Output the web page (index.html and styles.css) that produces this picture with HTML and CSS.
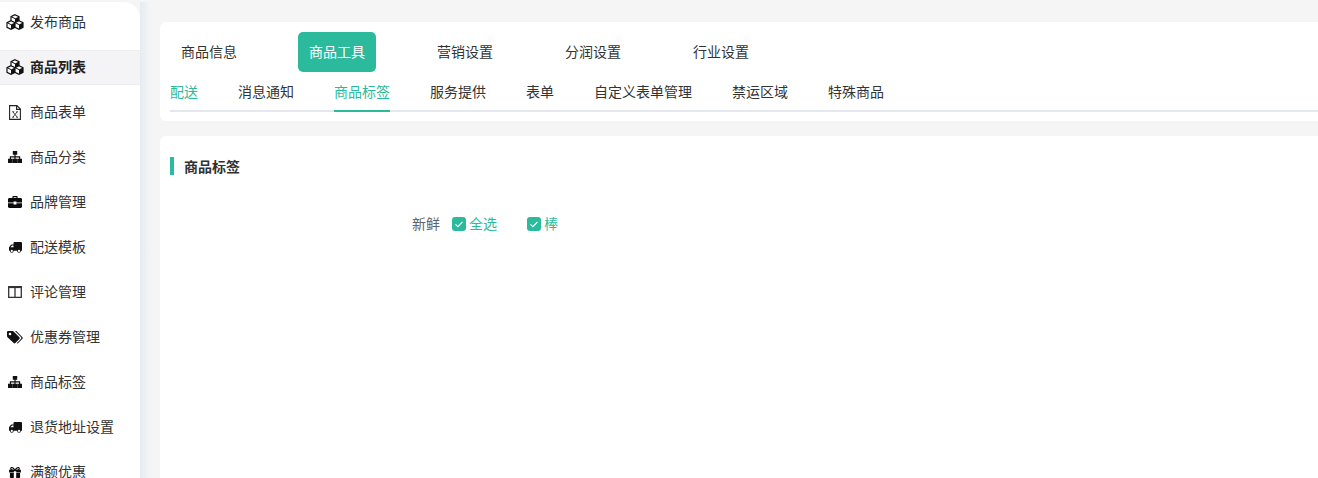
FILE: index.html
```html
<!DOCTYPE html>
<html lang="zh-CN">
<head>
<meta charset="utf-8">
<title>商品标签</title>
<link rel="stylesheet" href="styles.css">
</head>
<body>
<svg class="sprites" aria-hidden="true">
  <symbol id="cube" viewBox="0 0 10 10">
    <path d="M5 .7 9 2.600v4.800L5 9.300 1 7.400V2.600z" fill="#fff" stroke="#111" stroke-width="1.200"/>
    <path d="M5 4.600 9 2.600v4.800L5 9.300z" fill="#111"/>
    <path d="M1 2.600 5 4.600" stroke="#111" stroke-width="1"/>
  </symbol>
  <symbol id="i-cubes" viewBox="0 0 18 16">
    <use href="#cube" x="4" y="0" width="10" height="10"/>
    <use href="#cube" x="0" y="6" width="10" height="10"/>
    <use href="#cube" x="8" y="6" width="10" height="10"/>
  </symbol>
  <symbol id="i-file" viewBox="0 0 12 15">
    <path d="M.6.6h7.300l3.500 3.500v10.300H.6zM7.600.8v3.600h3.600" fill="none" stroke="#222" stroke-width="1.100"/>
    <path d="m3.900 6.800 4.200 5.400M8.100 6.800l-4.200 5.400M3.200 6.800h2M7.200 6.800h1.800M3.200 12.200h1.800M7.200 12.200h1.800" fill="none" stroke="#333" stroke-width=".9"/>
  </symbol>
  <symbol id="i-sitemap" viewBox="0 0 14 12">
    <path d="M4.800 0h4.400v3.800H7.600v1.400h4.600v2.600H14V12H9.400V7.800h1.600V6.400H7.600v1.400h1.600V12H4.800V7.800h1.600V6.400H3v1.400h1.600V12H0V7.800h1.800V5.200h4.600V3.800H4.800z" fill="#111"/>
  </symbol>
  <symbol id="i-case" viewBox="0 0 14 12">
    <path d="M4.400 2V1c0-.5.400-1 1-1h3.200c.6 0 1 .5 1 1v1h3c.8 0 1.400.6 1.400 1.400V6.400H8.400V5.400H5.600v1H0V3.400C0 2.600.6 2 1.400 2zm1.200 0h2.800V1.200H5.600zM0 7.300h5.600v1.100h2.800V7.300H14v3.300c0 .8-.6 1.400-1.400 1.400H1.400C.6 12 0 11.400 0 10.600z" fill="#0a0a0a" fill-rule="evenodd"/>
  </symbol>
  <symbol id="i-truck" viewBox="0 0 13 11">
    <path d="M13 .9c0-.5-.4-.9-.9-.9H5.400c-.5 0-.9.4-.9.9V2.400H3c-.4 0-.7.2-1 .4L.6 4.400C.2 4.800 0 5.200 0 5.700V8.800h.9a1.900 1.900 0 0 0 3.800 0h3.400a1.900 1.900 0 0 0 3.800 0H13zM2.800 10a1.100 1.100 0 1 1 0-2.200 1.100 1.100 0 0 1 0 2.200zm7.200 0a1.100 1.100 0 1 1 0-2.200 1.100 1.100 0 0 1 0 2.200zM1.400 5.200 3 3.600h1.500v1.600z" fill="#111" fill-rule="evenodd"/>
  </symbol>
  <symbol id="i-columns" viewBox="0 0 14 12">
    <path d="M.7.7h12.600v10.600H.7zM7 .7v10.600" fill="none" stroke="#333" stroke-width="1.300"/>
    <path d="M.7 1.400h12.600" stroke="#333" stroke-width="1.400"/>
  </symbol>
  <symbol id="i-tags" viewBox="0 0 16 13">
    <path d="M0 1.200C0 .5.500 0 1.200 0h4.300c.4 0 .8.200 1.100.5l5.800 5.800c.5.500.5 1.200 0 1.700l-4 4c-.5.500-1.200.5-1.700 0L.5 6.200C.2 5.900 0 5.500 0 5.100zM3 4.300a1.300 1.300 0 1 0 0-2.600 1.300 1.300 0 0 0 0 2.600z" fill="#111" fill-rule="evenodd"/>
    <path d="M8 0h1.300l5.900 5.900c.7.700.7 1.500 0 2.200l-4 4c-.5.500-1.100.5-1.500.1l4.200-4.300c.6-.6.600-1.300 0-1.900z" fill="#111"/>
  </symbol>
  <symbol id="i-gift" viewBox="0 0 14 13">
    <path d="M3.200 0C4.900 0 6.300 1.300 7 3c.7-1.700 2.100-3 3.800-3 1.100 0 1.900.7 1.900 1.700 0 .6-.2 1.100-.6 1.500H14v3.200H8.400V5H5.600v1.400H0V3.200h1.900c-.4-.4-.6-.9-.6-1.500C1.300.7 2.100 0 3.200 0zm0 1.400c-.4 0-.6.200-.6.500 0 .7.900 1.300 3 1.300C5 2 4.100 1.400 3.200 1.400zm7.600 0c-.9 0-1.800.6-2.400 1.800 2.100 0 3-.6 3-1.300 0-.3-.2-.5-.6-.5zM1 7.200h4.600V13H1.800c-.4 0-.8-.4-.8-.8zm7.400 0H13v5c0 .4-.4.800-.8.800H8.400z" fill="#0a0a0a" fill-rule="evenodd"/>
  </symbol>
</svg>

<aside class="sidebar">
  <a class="nav-item"><span class="nav-icon"><svg class="ic-cubes"><use href="#i-cubes"/></svg></span>发布商品</a>
  <a class="nav-item is-active"><span class="nav-icon"><svg class="ic-cubes"><use href="#i-cubes"/></svg></span>商品列表</a>
  <a class="nav-item"><span class="nav-icon"><svg class="ic-file"><use href="#i-file"/></svg></span>商品表单</a>
  <a class="nav-item"><span class="nav-icon"><svg class="ic-wide"><use href="#i-sitemap"/></svg></span>商品分类</a>
  <a class="nav-item"><span class="nav-icon"><svg class="ic-wide"><use href="#i-case"/></svg></span>品牌管理</a>
  <a class="nav-item"><span class="nav-icon"><svg class="ic-truck"><use href="#i-truck"/></svg></span>配送模板</a>
  <a class="nav-item"><span class="nav-icon"><svg class="ic-wide"><use href="#i-columns"/></svg></span>评论管理</a>
  <a class="nav-item"><span class="nav-icon"><svg class="ic-tags"><use href="#i-tags"/></svg></span>优惠券管理</a>
  <a class="nav-item"><span class="nav-icon"><svg class="ic-wide"><use href="#i-sitemap"/></svg></span>商品标签</a>
  <a class="nav-item"><span class="nav-icon"><svg class="ic-truck"><use href="#i-truck"/></svg></span>退货地址设置</a>
  <a class="nav-item"><span class="nav-icon"><svg class="ic-gift"><use href="#i-gift"/></svg></span>满额优惠</a>
</aside>

<main class="main">
  <section class="card tabs-card">
    <div class="main-tabs">
      <a class="main-tab">商品信息</a>
      <a class="main-tab is-active">商品工具</a>
      <a class="main-tab">营销设置</a>
      <a class="main-tab">分润设置</a>
      <a class="main-tab">行业设置</a>
    </div>
    <div class="sub-tabs">
      <a class="sub-tab is-green">配送</a>
      <a class="sub-tab">消息通知</a>
      <a class="sub-tab is-active">商品标签</a>
      <a class="sub-tab">服务提供</a>
      <a class="sub-tab">表单</a>
      <a class="sub-tab">自定义表单管理</a>
      <a class="sub-tab">禁运区域</a>
      <a class="sub-tab">特殊商品</a>
    </div>
  </section>

  <section class="card content-card">
    <h2 class="section-title">商品标签</h2>
    <div class="tag-row">
      <span class="tag-label">新鲜</span>
      <label class="check check-all"><span class="box"><svg viewBox="0 0 14 14"><path d="m3.500 7.300 2.400 2.300 4.600-4.800" fill="none" stroke="#fff" stroke-width="1.100"/></svg></span>全选</label>
      <label class="check"><span class="box"><svg viewBox="0 0 14 14"><path d="m3.500 7.300 2.400 2.300 4.600-4.800" fill="none" stroke="#fff" stroke-width="1.100"/></svg></span>棒</label>
    </div>
  </section>
</main>
</body>
</html>
```
FILE: styles.css
```css
* { box-sizing: border-box; }

html, body { height: 100%; }

body {
  margin: 0;
  display: flex;
  height: 100vh;
  overflow: hidden;
  background: #f5f5f5;
  color: #303133;
  font: 14px/20px "Noto Sans CJK SC", "Noto Sans", sans-serif;
}

.sprites { width: 0; height: 0; position: absolute; }

.sidebar {
  flex: 0 0 140px;
  margin-top: 2px;
  padding-top: 3px;
  background: #fff;
  border-top-right-radius: 16px;
  overflow: hidden;
}

.nav-item {
  display: flex;
  align-items: center;
  height: 35px;
  margin-bottom: 10px;
  padding: 0 0 4px 6px;
  color: #333;
  white-space: nowrap;
}

.nav-item.is-active {
  background: #f4f4f6;
  border-top: 1px solid #eeeef2;
  border-bottom: 1px solid #eeeef2;
  font-weight: 700;
  color: #222;
}

.nav-icon {
  flex: 0 0 18px;
  margin: 3px 6px 0 0;
  display: flex;
  justify-content: center;
  align-items: center;
}

.ic-cubes { width: 18px; height: 16px; }
.ic-file { width: 12px; height: 15px; }
.ic-wide { width: 14px; height: 12px; }
.ic-truck { width: 13px; height: 11px; margin-left: 1px; }
.ic-tags { width: 16px; height: 13px; }
.ic-gift { width: 12px; height: 11px; }

.main {
  flex: 1;
  min-width: 0;
  padding: 22px 0 0 20px;
  background: linear-gradient(to right, #e6ebf0, #f5f5f5) 0 2px / 11px 100% no-repeat;
}

.card {
  background: #fff;
  border-radius: 6px 0 0 6px;
}

.tabs-card {
  height: 99px;
  padding: 10px 0 0 10px;
}

.main-tabs { display: flex; gap: 50px; }

.main-tab {
  width: 78px;
  height: 40px;
  line-height: 38px;
  text-align: center;
  border-radius: 5px;
  color: #333;
}

.main-tab.is-active { background: #2bbb9c; color: #fff; }

.sub-tabs {
  display: flex;
  gap: 40px;
  height: 40px;
  border-bottom: 2px solid #e4e7ed;
}

.sub-tab {
  height: 40px;
  line-height: 38px;
  color: #333;
}

.sub-tab.is-green { color: #2bbb9c; }

.sub-tab.is-active {
  color: #2bbb9c;
  border-bottom: 2px solid #2bbb9c;
}

.content-card {
  margin-top: 15px;
  height: 400px;
  padding: 21px 0 0 10px;
  border-radius: 6px 0 0 0;
}

.section-title {
  margin: 0;
  height: 18px;
  padding-left: 10px;
  border-left: 4px solid #2bbb9c;
  font-size: 14px;
  line-height: 18px;
  font-weight: 700;
  color: #303133;
}

.tag-row {
  display: flex;
  align-items: flex-start;
  margin: 38px 0 0 242px;
  height: 20px;
  color: #606266;
}

.tag-label { margin-right: 12px; }

.check {
  display: flex;
  align-items: flex-start;
  color: #2bbb9c;
}

.check-all { margin-right: 30px; }

.box {
  width: 14px;
  height: 14px;
  margin: 4px 3px 0 0;
  background: #2bbb9c;
  border-radius: 3px;
  display: flex;
}

.box svg { width: 14px; height: 14px; }
```
